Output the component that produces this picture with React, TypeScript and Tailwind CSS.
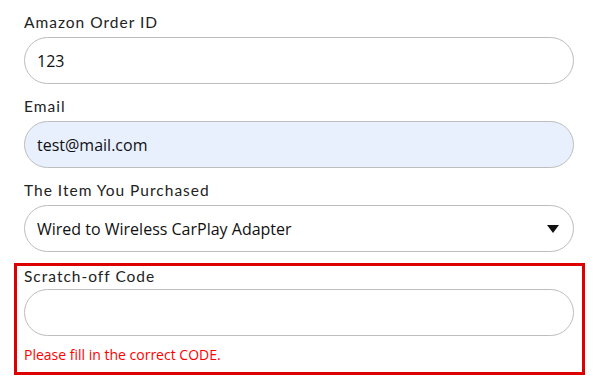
import React, { useState } from 'react';

interface FieldProps {
  label: string;
  gap?: string;
  children: React.ReactNode;
}

function Field({ label, gap = 'mb-[5px]', children }: FieldProps) {
  return (
    <div className="flex flex-col">
      <label className={`h-[20px] text-[15.5px] leading-[20px] text-[#222] tracking-[1px] ${gap}`} style={{ fontFamily: 'Lato, "Open Sans", sans-serif' }}>
        {label}
      </label>
      {children}
    </div>
  );
}

const inputCls =
  'w-[550px] h-[47px] rounded-full border border-[#bdbdbd] px-[12px] text-[16px] text-[#111] outline-none';

export default function App() {
  const [orderId, setOrderId] = useState('123');
  const [email, setEmail] = useState('test@mail.com');
  const [code, setCode] = useState('');

  return (
    <div className="w-[599px] h-[380px] bg-white pt-[12px]" style={{ fontFamily: '"Open Sans", sans-serif' }}>
      <div className="flex flex-col pl-[24px] gap-[12px]">
        <Field label="Amazon Order ID">
          <input className={`${inputCls} bg-white`} value={orderId} onChange={(e) => setOrderId(e.target.value)} />
        </Field>
        <Field label="Email">
          <input className={`${inputCls} bg-[#e8f0fe]`} value={email} onChange={(e) => setEmail(e.target.value)} />
        </Field>
        <Field label="The Item You Purchased">
          <div className={`${inputCls} bg-white flex items-center justify-between pr-[14px]`}>
            <span>Wired to Wireless CarPlay Adapter</span>
            <svg width="12" height="8" viewBox="0 0 12 8">
              <polygon points="0,0 12,0 6,8" fill="#111" />
            </svg>
          </div>
        </Field>
      </div>
      {/* поле с ошибкой */}
      <div className="ml-[14px] mt-[11px] w-[571px] h-[112px] border-[3px] border-[#dd0000] pl-[7px]">
        <Field label="Scratch-off Code" gap="mb-[3px]">
          <input className={`${inputCls} bg-white`} value={code} onChange={(e) => setCode(e.target.value)} />
        </Field>
        <p className="mt-[10px] text-[14px] leading-[18px] text-[#ff0000]">Please fill in the correct CODE.</p>
      </div>
    </div>
  );
}
